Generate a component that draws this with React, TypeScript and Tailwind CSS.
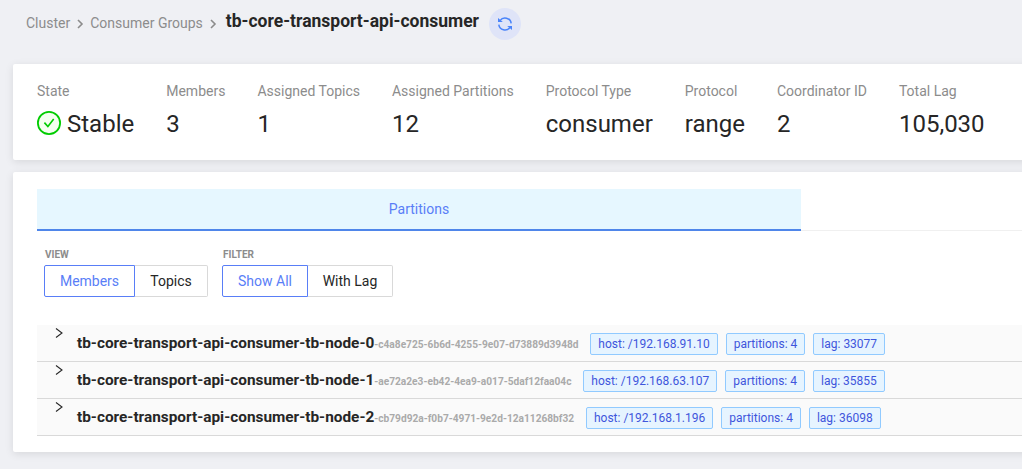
import React from "react";

const stats: [string, string][] = [
  ["State", "Stable"],
  ["Members", "3"],
  ["Assigned Topics", "1"],
  ["Assigned Partitions", "12"],
  ["Protocol Type", "consumer"],
  ["Protocol", "range"],
  ["Coordinator ID", "2"],
  ["Total Lag", "105,030"],
];

const members = [
  { n: 0, id: "-c4a8e725-6b6d-4255-9e07-d73889d3948d", tags: ["host: /192.168.91.10", "partitions: 4", "lag: 33077"] },
  { n: 1, id: "-ae72a2e3-eb42-4ea9-a017-5daf12faa04c", tags: ["host: /192.168.63.107", "partitions: 4", "lag: 35855"] },
  { n: 2, id: "-cb79d92a-f0b7-4971-9e2d-12a11268bf32", tags: ["host: /192.168.1.196", "partitions: 4", "lag: 36098"] },
];

function Separator() {
  return (
    <svg className="mr-[6px] ml-[7px] mt-px h-[10px] w-[7px] shrink-0" viewBox="0 0 7 10" fill="none" stroke="#8c8c8c" strokeWidth="1.6">
      <path d="M1 1l4 4-4 4" />
    </svg>
  );
}

function StableIcon() {
  return (
    <svg className="-mt-[2px] mr-[6px] size-6 shrink-0" viewBox="0 0 24 24" fill="none" stroke="#0c0" strokeWidth="2">
      <circle cx="12" cy="12" r="11.1" fill="#f4fff0" strokeWidth="1.8" />
      <path d="M7.4 11.6l3.5 4 5.8-7.6" strokeWidth="1.6" />
    </svg>
  );
}

function SyncIcon() {
  return (
    <svg className="size-[14px]" viewBox="0 0 14 14" fill="none" stroke="#4a84fa" strokeWidth="1.5">
      <path d="M2 3.6A6.2 6.2 0 0 1 13.2 6.3" />
      <path d="M12 10.4A6.2 6.2 0 0 1 .8 7.7" />
      <path d="M0 .9v4.2h4.8z" fill="#4a84fa" stroke="none" />
      <path d="M14 13.1V8.9H9.2z" fill="#4a84fa" stroke="none" />
    </svg>
  );
}

function Choice({ label, options, first, second }: { label: string; options: string[]; first: string; second: string }) {
  return (
    <div>
      <div className="h-[15px] pl-px text-[10px] leading-[15px] font-bold text-[#8c8c8c]">{label}</div>
      <div className="mt-[3px] flex h-8 text-[14px]">
        <button className={`${first} rounded-l-[2px] border border-[#597ef7] text-[#597ef7]`}>{options[0]}</button>
        <button className={`${second} rounded-r-[2px] border border-l-0 border-[#d9d9d9] text-[#262626]`}>{options[1]}</button>
      </div>
    </div>
  );
}

export default function App() {
  return (
    <div className="h-[469px] w-[1022px] overflow-hidden bg-[#eff0f4] font-['Roboto',sans-serif] text-[#262626]">
      <header className="flex h-16 items-start pl-[26px]">
        <nav className="flex h-[46px] items-center text-[14px] whitespace-nowrap text-[#8c8c8c]">
          <span>Cluster</span>
          <Separator />
          <span>Consumer Groups</span>
          <Separator />
        </nav>
        <h1 className="ml-[3px] flex h-[42px] items-center text-[17.5px] font-bold whitespace-nowrap">tb-core-transport-api-consumer</h1>
        <button aria-label="Refresh" className="mt-[7.5px] ml-[10px] flex size-8 items-center justify-center rounded-full bg-[#dfe4f8]">
          <SyncIcon />
        </button>
      </header>

      <section className="ml-[13px] flex h-24 w-[1030px] rounded-[2px] bg-white pl-6 shadow-[0_2px_8px_rgba(0,0,0,0.1)]">
        {stats.map(([label, value], i) => (
          <div key={label} className="mr-8 shrink-0 whitespace-nowrap">
            <div className="mt-4 h-[22px] text-[14px] leading-[22px] text-[#8c8c8c]">{label}</div>
            <div className="mt-1 flex h-9 items-center text-[24px]">
              {i === 0 && <StableIcon />}
              <span>{value}</span>
            </div>
          </div>
        ))}
      </section>

      <section className="mt-3 ml-[13px] h-[280px] w-[1030px] rounded-[2px] bg-white pt-[17px] pl-6 shadow-[0_2px_8px_rgba(0,0,0,0.1)]">
        <div className="flex h-[42px] border-b border-[#f0f0f0]">
          <div className="flex h-[42px] w-[764px] items-center justify-center border-b-2 border-[#4f86ea] bg-[#e6f7ff] text-[14px] text-[#597ef7]">Partitions</div>
        </div>
        <div className="mt-4 flex gap-[14px] pl-[7px]">
          <Choice label="VIEW" options={["Members", "Topics"]} first="w-[91px]" second="w-[73px]" />
          <Choice label="FILTER" options={["Show All", "With Lag"]} first="w-[86px]" second="w-[85px]" />
        </div>
        <div className="mt-7">
          {members.map((m) => (
            <div key={m.n} className="flex h-[37px] border-b border-[#d9d9d9] bg-[#fafafa]">
              <div className="w-10 pt-[3px] pl-[18px]">
                <svg className="h-[10px] w-2" viewBox="0 0 8 10" fill="none" stroke="#262626" strokeWidth="1.1">
                  <path d="M1 .5L7 5 1 9.5" />
                </svg>
              </div>
              <div className="flex h-9 items-baseline pt-2 whitespace-nowrap">
                <span className="text-[15.36px] leading-5 font-bold">tb-core-transport-api-consumer-tb-node-{m.n}</span>
                <span className="text-[10.16px] font-bold text-[#aaa]">{m.id}</span>
              </div>
              <div className="ml-[11.8px] flex gap-2 pt-2">
                {m.tags.map((t) => (
                  <span key={t} className="flex h-[22px] items-center rounded-[2px] border border-[#91caff] bg-[#e6f4ff] px-[7px] text-[12px] whitespace-nowrap text-[#3f56dc]">{t}</span>
                ))}
              </div>
            </div>
          ))}
        </div>
      </section>
    </div>
  );
}
